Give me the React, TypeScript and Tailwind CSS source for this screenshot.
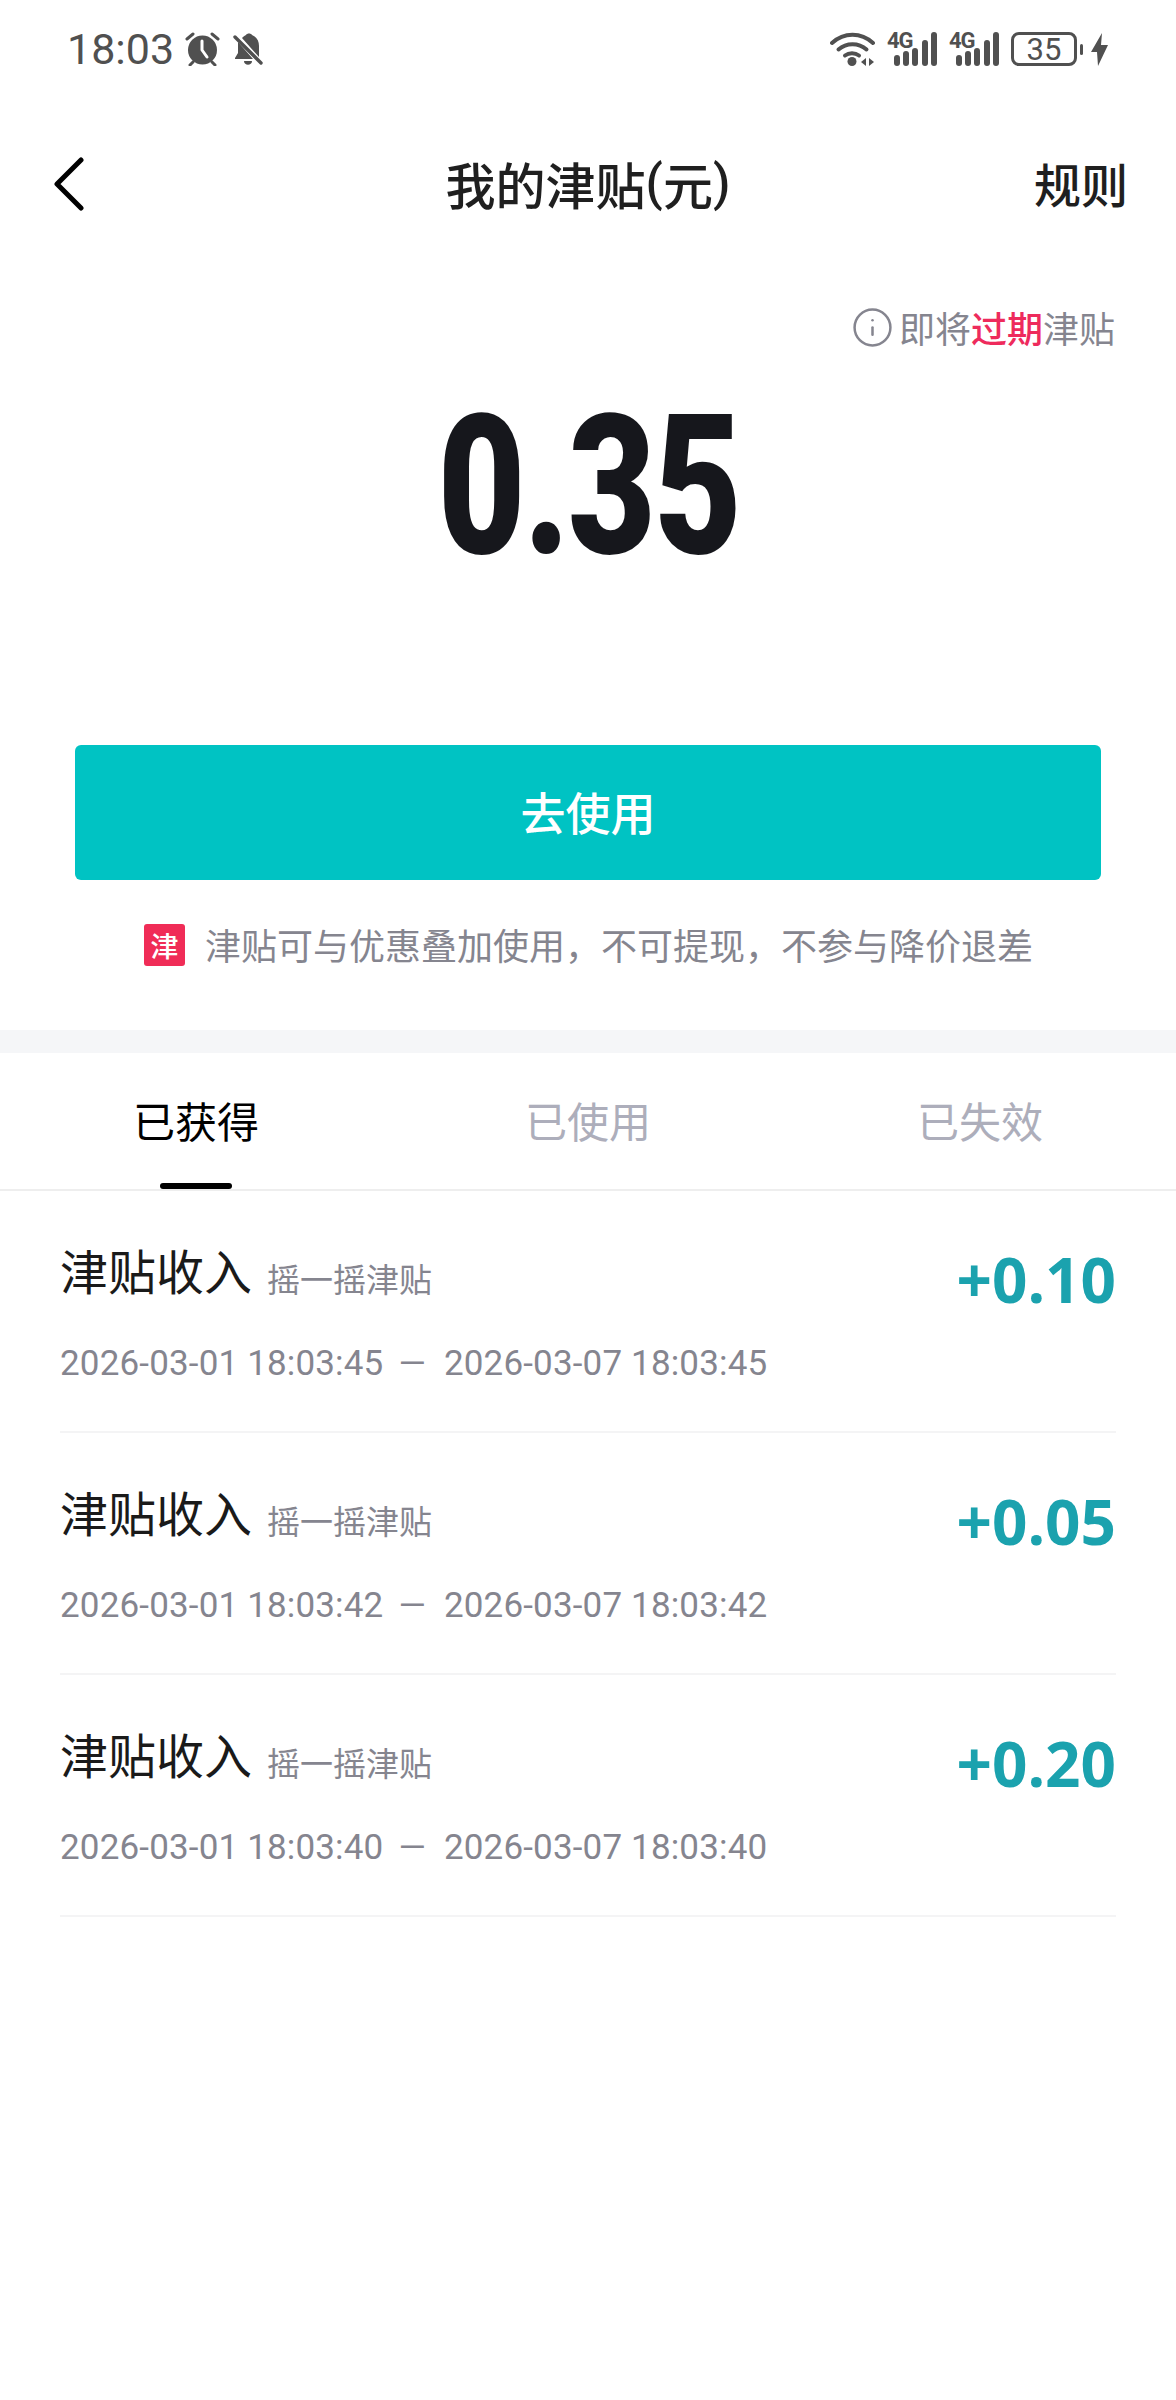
import { Info } from 'lucide-react';

const rows = [
  { amount: '+0.10', start: '2026-03-01 18:03:45', end: '2026-03-07 18:03:45' },
  { amount: '+0.05', start: '2026-03-01 18:03:42', end: '2026-03-07 18:03:42' },
  { amount: '+0.20', start: '2026-03-01 18:03:40', end: '2026-03-07 18:03:40' },
];

function AlarmIcon() {
  return (
    <svg width="35" height="34" viewBox="0 0 35 34" fill="none">
      <circle cx="17.5" cy="18" r="14.5" fill="#505050" />
      <path d="M17 9v9l5 7" stroke="#fff" strokeWidth="3" strokeLinecap="round" strokeLinejoin="round" />
      <path d="M2 7l6-5M33 7l-6-5M5 33l3-3M30 33l-3-3" stroke="#505050" strokeWidth="3" strokeLinecap="round" />
    </svg>
  );
}

function BellOffIcon() {
  return (
    <svg width="30" height="34" viewBox="0 0 30 34" fill="none">
      <path d="M13 3c1-2 5-2 6 0 5 2 7 6 7 11v11L9 6c1-1 2-2 4-3z" fill="#505050" />
      <path d="M5 13v8l-3 5v1h18L5 10z" fill="#505050" />
      <path d="M11 29h8c0 5-8 5-8 0z" fill="#505050" />
      <path d="M2 5l26 26" stroke="#505050" strokeWidth="3.4" strokeLinecap="round" />
    </svg>
  );
}

function WifiIcon() {
  return (
    <svg width="45" height="34" viewBox="0 0 45 34" fill="none">
      <path d="M2 11c12-11 29-11 41 0" stroke="#505050" strokeWidth="4" strokeLinecap="round" />
      <path d="M8.500 17.500c8-7 20-7 28 0" stroke="#505050" strokeWidth="4" strokeLinecap="round" />
      <path d="M15 23.500c4-3 10-3 14 0" stroke="#505050" strokeWidth="4" strokeLinecap="round" />
      <circle cx="22" cy="29.500" r="4.500" fill="#505050" />
      <path d="M36 26v8l-5-4zM39 26v8l5-4z" fill="#505050" />
    </svg>
  );
}

function SignalIcon() {
  return (
    <svg width="50" height="42" viewBox="0 -8 50 42" className="-mt-[8px]">
      <text x="0" y="16" fontFamily="Roboto" fontWeight="700" fontSize="22" letterSpacing="-1" fill="#505050">4G</text>
      <rect x="7" y="23" width="6" height="11" rx="3" fill="#505050" />
      <rect x="16" y="19" width="6" height="15" rx="3" fill="#505050" />
      <rect x="25" y="16" width="6" height="18" rx="3" fill="#505050" />
      <rect x="35" y="8" width="6" height="26" rx="3" fill="#505050" />
      <rect x="44" y="0" width="6" height="34" rx="3" fill="#505050" />
    </svg>
  );
}

function BoltIcon() {
  return (
    <svg width="17" height="33" viewBox="0 0 17 33">
      <path d="M11 0L0 19h6l1 14L17 12h-7z" fill="#505050" />
    </svg>
  );
}

export default function App() {
  return (
    <div className="w-[1176px] h-[2400px] bg-white font-['Noto_Sans_CJK_SC',sans-serif] overflow-hidden">
      {/* Status bar */}
      <div className="h-[98px] pl-[67px] pr-[68px] flex items-center justify-between text-[#505050]">
        <div className="flex items-center">
          <span className="font-['Roboto'] text-[43px] leading-none w-[118px]">18:03</span>
          <AlarmIcon />
          <span className="w-[13px]" />
          <BellOffIcon />
        </div>
        <div className="flex items-center">
          <WifiIcon />
          <span className="w-[12px]" />
          <SignalIcon />
          <span className="w-[12px]" />
          <SignalIcon />
          <span className="w-[12px]" />
          <div className="w-[66px] h-[34px] rounded-[8px] border-[3px] border-[#505050] flex items-center justify-center font-['Roboto'] text-[31px] leading-none">35</div>
          <div className="w-[3px] h-[11px] bg-[#505050] ml-[3px] mr-[8px] rounded-sm" />
          <BoltIcon />
        </div>
      </div>

      {/* Nav */}
      <div className="h-[172px] flex items-center justify-between pl-[53px] pr-[48px] relative">
        <svg width="31" height="54" viewBox="0 0 31 54" fill="none">
          <path d="M28 3L4 27l24 24" stroke="#000" strokeWidth="5" strokeLinecap="round" strokeLinejoin="round" />
        </svg>
        <div className="absolute inset-x-0 -top-[2px] bottom-0 flex items-center justify-center text-[50px] font-medium leading-none text-[#1f1f1f]">
          <span>我的津贴</span>
          <span className="font-['Roboto']">(</span>
          <span>元</span>
          <span className="font-['Roboto']">)</span>
        </div>
        <span className="text-[47px] font-medium leading-none text-[#1f1f1f] -mt-[3px]">规则</span>
      </div>

      {/* Balance */}
      <div className="flex items-center justify-end pr-[61px] h-[40px] mt-[37px] text-[36px] leading-none text-[#85858f]">
        <Info className="w-[43px] h-[43px] mr-[5px]" strokeWidth={1.4} />
        <span>即将</span>
        <span className="text-[#ee2b5c] font-medium">过期</span>
        <span>津贴</span>
      </div>
      <div className="mt-[60px] h-[160px] flex items-center justify-center pl-[2px]">
        <span className="font-['Roboto'] font-black text-[194px] leading-none text-[#16171c] scale-x-[.78] tracking-[-2px]">0.35</span>
      </div>

      <div className="mt-[178px] mx-[75px] h-[135px] rounded-[6px] bg-[#00c3c3] flex items-center justify-center pb-[3px] text-white text-[45px] font-medium leading-none">去使用</div>

      <div className="mt-[44px] flex items-center pl-[144px] text-[36px] leading-none text-[#85858f]">
        <span className="w-[41px] h-[42px] rounded-[3px] bg-[#f02c57] text-white text-[28px] font-medium flex items-center justify-center mr-[20px]">津</span>
        <span className="-mt-[2px]">津贴可与优惠叠加使用，不可提现，不参与降价退差</span>
      </div>

      <div className="mt-[64px] h-[23px] bg-[#f5f6f8]" />

      {/* Tabs */}
      <div className="grid grid-cols-3 h-[138px] border-b-2 border-[#eeeeee] text-[42px] leading-none text-center">
        <div className="relative pt-[46px] text-black">
          已获得
          <div className="absolute left-[160px] bottom-0 w-[72px] h-[6px] rounded-sm bg-black" />
        </div>
        <div className="pt-[46px] text-[#adaebb]">已使用</div>
        <div className="pt-[46px] text-[#adaebb]">已失效</div>
      </div>

      {/* Records */}
      <div className="mx-[60px]">
        {rows.map((row) => (
          <div key={row.start} className="h-[242px] border-b-2 border-[#f4f4f5] flex justify-between">
            <div>
              <div className="mt-[54px] flex items-end">
                <span className="text-[48px] leading-none text-[#1a1a1a]">津贴收入</span>
                <span className="ml-[15px] -mb-[2px] text-[33px] leading-none text-[#85858f]">摇一摇津贴</span>
              </div>
              <div className="mt-[53px] font-['Roboto'] text-[35px] tracking-[0.16px] leading-none text-[#85858f] flex">
                <span>{row.start}</span>
                <span className="ml-[15px] mr-[18px]">—</span>
                <span>{row.end}</span>
              </div>
            </div>
            <span className="mt-[57px] font-['Open_Sans'] font-bold text-[62px] leading-none text-[#1ba2ae]">{row.amount}</span>
          </div>
        ))}
      </div>
    </div>
  );
}
